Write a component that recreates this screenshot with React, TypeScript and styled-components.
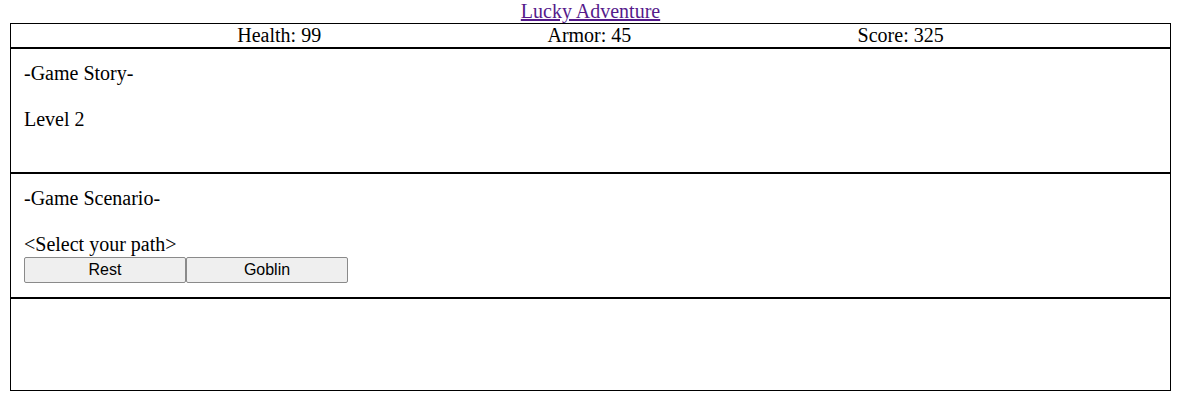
import React from "react";
import styled, { createGlobalStyle } from "styled-components";

const Global = createGlobalStyle`
  html, body {
    margin: 0;
    padding: 0;
    background: #ffffff;
  }
  body {
    font-family: "Liberation Serif", "Times New Roman", serif;
    font-size: 20px;
    color: #000;
  }
`;

const Page = styled.div`
  margin-left: 10px;
  width: 1161px;
`;

const Title = styled.div`
  text-align: center;
  line-height: 23px;
`;

const TitleLink = styled.a`
  color: #551a8b;
  text-decoration: underline;
`;

const Board = styled.div`
  display: flex;
  flex-direction: column;
`;

const StatsBar = styled.div`
  display: flex;
  justify-content: space-evenly;
  border: 1px solid #000;
  line-height: 23px;
  height: 23px;
`;

const Stat = styled.span``;

const Section = styled.div<{ $h: number }>`
  border: 1px solid #000;
  padding: 13px 13px 11px 13px;
  height: ${(p) => p.$h}px;
  line-height: 23px;
`;

const Line = styled.div<{ $gap?: boolean }>`
  line-height: 23px;
  margin-bottom: ${(p) => (p.$gap ? "23px" : "0")};
`;

const Choices = styled.div`
  display: flex;
  margin-top: 1px;
`;

const Choice = styled.button`
  width: 162px;
  height: 26px;
  padding: 0;
  margin: 0;
  background: #efefef;
  border: 1px solid #8a8a8a;
  border-radius: 2px;
  font-family: "Liberation Sans", Arial, sans-serif;
  font-size: 16px;
  color: #000;
  line-height: 24px;
`;

export default function App() {
  return (
    <>
      <Global />
      <Page>
        <Title>
          <TitleLink href="#">Lucky Adventure</TitleLink>
        </Title>
        <Board>
          <StatsBar>
            <Stat>Health: 99</Stat>
            <Stat>Armor: 45</Stat>
            <Stat>Score: 325</Stat>
          </StatsBar>
          <Section $h={99}>
            <Line $gap>-Game Story-</Line>
            <Line>Level 2</Line>
          </Section>
          <Section $h={99}>
            <Line $gap>-Game Scenario-</Line>
            <Line>&lt;Select your path&gt;</Line>
            <Choices>
              <Choice>Rest</Choice>
              <Choice>Goblin</Choice>
            </Choices>
          </Section>
          <Section $h={67} />
        </Board>
      </Page>
    </>
  );
}
